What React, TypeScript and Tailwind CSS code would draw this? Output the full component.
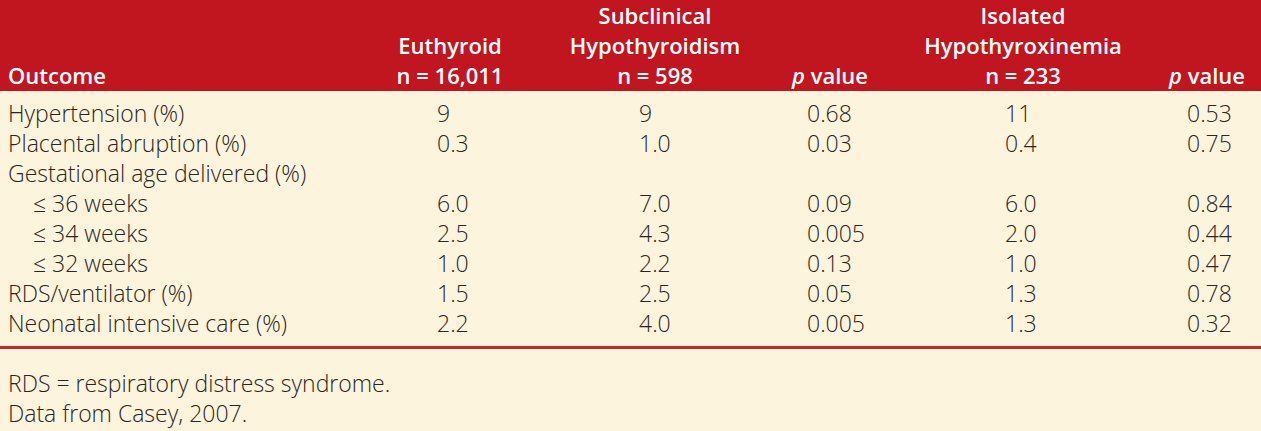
import React from "react"

type Row = { label: string; indent?: boolean; vals: string[] }

const rows: Row[] = [
  { label: "Hypertension (%)", vals: ["9", "9", "0.68", "11", "0.53"] },
  { label: "Placental abruption (%)", vals: ["0.3", "1.0", "0.03", "0.4", "0.75"] },
  { label: "Gestational age delivered (%)", vals: ["", "", "", "", ""] },
  { label: "≤ 36 weeks", indent: true, vals: ["6.0", "7.0", "0.09", "6.0", "0.84"] },
  { label: "≤ 34 weeks", indent: true, vals: ["2.5", "4.3", "0.005", "2.0", "0.44"] },
  { label: "≤ 32 weeks", indent: true, vals: ["1.0", "2.2", "0.13", "1.0", "0.47"] },
  { label: "RDS/ventilator (%)", vals: ["1.5", "2.5", "0.05", "1.3", "0.78"] },
  { label: "Neonatal intensive care (%)", vals: ["2.2", "4.0", "0.005", "1.3", "0.32"] },
]

const grid = "grid grid-cols-[390px_120px_290px_60px_326px_75px]"
// left padding of each data column
const pads = ["pl-[47px]", "pl-[129px]", "pl-[7px]", "pl-[145px]", "pl-[1px]"]

function PValue() {
  return (
    <span>
      <i>p</i> value
    </span>
  )
}

export default function App() {
  return (
    <div
      className="w-[1261px] h-[431px] bg-[#fdf4dd] text-[#2a2722] overflow-hidden"
      style={{ fontFamily: '"Open Sans", sans-serif' }}
    >
      {/* Header */}
      <div className={`${grid} h-[91px] bg-[#c1151f] text-white font-semibold text-[22px] leading-[30px] items-end pb-[1px]`}>
        <div className="pl-2">Outcome</div>
        <div className="flex flex-col items-center">
          <span>Euthyroid</span>
          <span className="whitespace-nowrap">n = 16,011</span>
        </div>
        <div className="flex flex-col items-center">
          <span>Subclinical</span>
          <span>Hypothyroidism</span>
          <span>n = 598</span>
        </div>
        <div className="flex flex-col items-center whitespace-nowrap">
          <PValue />
        </div>
        <div className="flex flex-col items-center">
          <span>Isolated</span>
          <span>Hypothyroxinemia</span>
          <span>n = 233</span>
        </div>
        <div className="flex justify-end pr-4 whitespace-nowrap">
          <PValue />
        </div>
      </div>

      {/* Body */}
      <div className="pt-[7px] pb-[8px] text-[23px] leading-[30px] font-light">
        {rows.map((r) => (
          <div key={r.label} className={`${grid} h-[30px]`}>
            <div className={`whitespace-nowrap ${r.indent ? "pl-[33px]" : "pl-2"}`}>{r.label}</div>
            {r.vals.map((v, i) => (
              <div key={i} className={pads[i]}>
                {v}
              </div>
            ))}
          </div>
        ))}
      </div>

      <div className="h-[3px] bg-[#c42a30]" />

      {/* Footnotes */}
      <div className="pt-[19px] pl-2 text-[23px] leading-[30px] font-light">
        <div>RDS = respiratory distress syndrome.</div>
        <div>Data from Casey, 2007.</div>
      </div>
    </div>
  )
}
